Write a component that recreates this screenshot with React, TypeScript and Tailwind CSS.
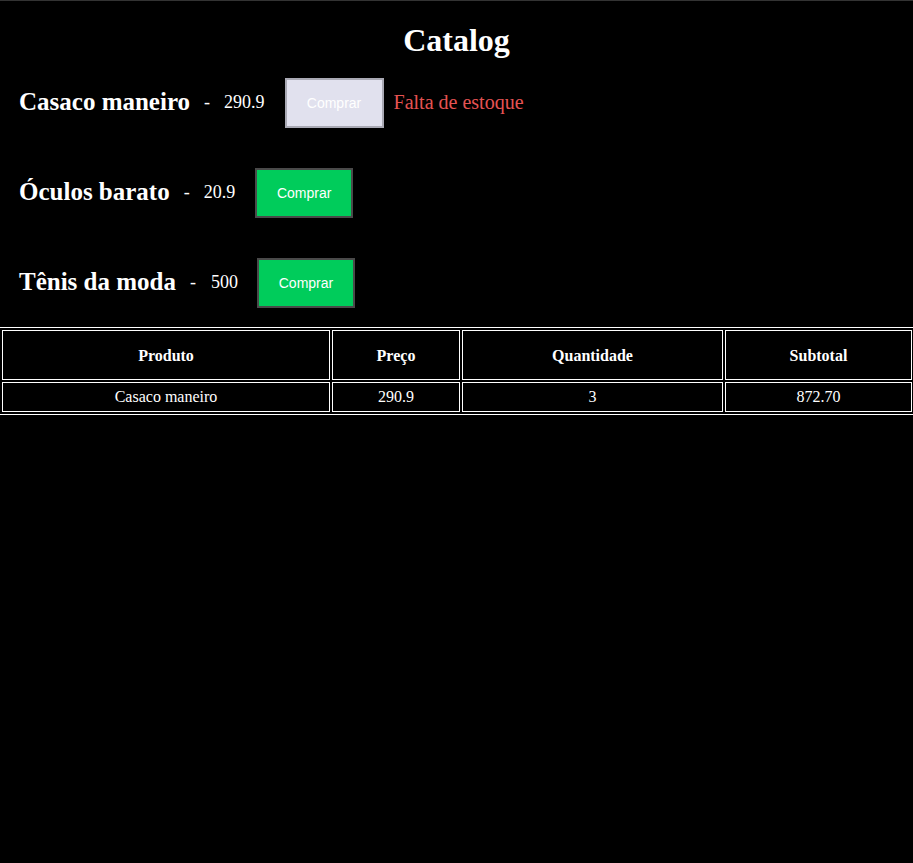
import React from "react";

type Product = { name: string; price: string; soldOut?: boolean; gapDash: number; gapPrice: number; gapBtn: number };

const products: Product[] = [
  { name: "Casaco maneiro", price: "290.9", soldOut: true, gapDash: 14, gapPrice: 14, gapBtn: 20 },
  { name: "Óculos barato", price: "20.9", gapDash: 14, gapPrice: 14, gapBtn: 20 },
  { name: "Tênis da moda", price: "500", gapDash: 14, gapPrice: 15, gapBtn: 19 },
];

export default function App() {
  return (
    <div
      className="min-h-[863px] bg-black text-white border-t border-[#333]"
      style={{ fontFamily: '"Liberation Serif", "Times New Roman", serif' }}
    >
      <h1 className="pt-[21px] text-center text-[32px] leading-[36px] font-bold">Catalog</h1>
      <div className="mt-[20px] flex flex-col gap-[40px] pl-[19px]">
        {products.map((p) => (
          <div key={p.name} className="flex h-[50px] items-center">
            <h2 className="mb-[3px] text-[25px] font-bold leading-[28px]">{p.name}</h2>
            <span className="mb-[3px] text-[18px] leading-[22px]" style={{ marginLeft: p.gapDash }}>-</span>
            <span className="mb-[3px] text-[18px] leading-[22px]" style={{ marginLeft: p.gapPrice }}>{p.price}</span>
            {p.soldOut ? (
              <button
                disabled
                className="h-[50px] w-[99px] border-2 border-[#a9a9b4] bg-[#e1e1ee] pt-[1px] text-[14px] text-white"
                style={{ marginLeft: p.gapBtn, fontFamily: '"Liberation Sans", Arial, sans-serif' }}
              >
                Comprar
              </button>
            ) : (
              <button
                className="h-[50px] w-[98px] border-2 border-[#4a4a4a] bg-[#00cc5b] pt-[1px] text-[14px] text-white"
                style={{ marginLeft: p.gapBtn, fontFamily: '"Liberation Sans", Arial, sans-serif' }}
              >
                Comprar
              </button>
            )}
            {p.soldOut && (
              <span className="mb-[3px] ml-[10px] text-[20px] leading-[24px] text-[#e55353]">Falta de estoque</span>
            )}
          </div>
        ))}
      </div>
      <div className="mt-[19px] w-full overflow-hidden">
        <table className="ml-[-1px] w-[916px] table-fixed border border-white border-separate border-spacing-[2px] text-[16px]">
          <colgroup>
            <col className="w-[328px]" />
            <col className="w-[128px]" />
            <col className="w-[261px]" />
            <col className="w-[187px]" />
          </colgroup>
          <thead>
            <tr className="h-[50px]">
              <th className="border border-white p-0 pt-[1px] text-center font-bold">Produto</th>
              <th className="border border-white p-0 pt-[1px] text-center font-bold">Preço</th>
              <th className="border border-white p-0 pt-[1px] text-center font-bold">Quantidade</th>
              <th className="border border-white p-0 pt-[1px] text-center font-bold">Subtotal</th>
            </tr>
          </thead>
          <tbody>
            <tr className="h-[30px]">
              <td className="border border-white p-0 text-center">Casaco maneiro</td>
              <td className="border border-white p-0 text-center">290.9</td>
              <td className="border border-white p-0 text-center">3</td>
              <td className="border border-white p-0 text-center">872.70</td>
            </tr>
          </tbody>
        </table>
      </div>
    </div>
  );
}
